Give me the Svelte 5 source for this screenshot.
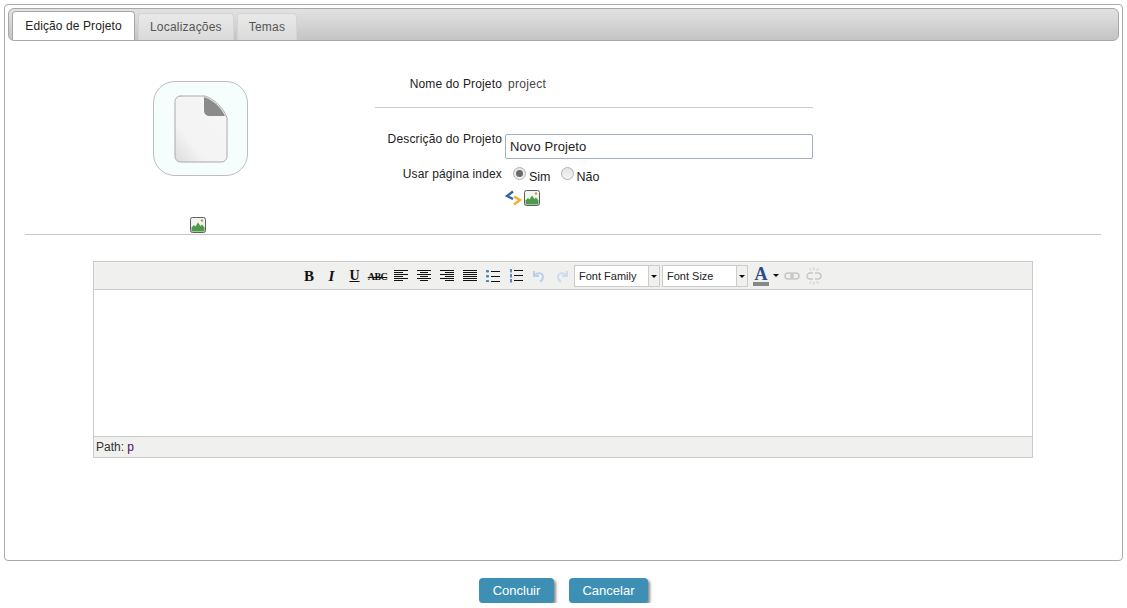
<script>
    const tabs = ['Edição de Projeto', 'Localizações', 'Temas'];
    const alignIcons = [
        [[0, 14], [0, 9], [0, 14], [0, 9], [0, 14], [0, 9]],
        [[0, 14], [3, 11], [0, 14], [3, 11], [0, 14], [3, 11]],
        [[0, 14], [5, 14], [0, 14], [5, 14], [0, 14], [5, 14]],
        [[0, 14], [0, 14], [0, 14], [0, 14], [0, 14], [0, 14]]
    ];
</script>

{#snippet imageIcon()}
    <svg class="img-icon" width="16" height="16" viewBox="0 0 16 16">
        <rect x="0.5" y="0.5" width="15" height="15" rx="2" fill="#f2f4ee" stroke="#5a5f5a" />
        <path d="M1.500 14.500V10.500L4 8L5.500 9.500L8 5.500L10.500 9L12 7.500L14.500 10.500V14.500Z" fill="#4c9a4a" />
        <circle cx="12" cy="3.500" r="1.200" fill="#b3a14c" />
    </svg>
{/snippet}

<div class="panel">
    <div class="tabbar">
        {#each tabs as tab, i}
            <div class="tab" class:active={i === 0}>{tab}</div>
        {/each}
    </div>

    <div class="content">
        <div class="top">
            <div class="left">
                <div class="app-icon">
                    <svg width="54" height="68" viewBox="0 0 54 68">
                        <defs>
                            <linearGradient id="sheet" x1="0" y1="1" x2="1" y2="0">
                                <stop offset="0" stop-color="#dcdcdc" />
                                <stop offset="0.3" stop-color="#f3f3f3" />
                                <stop offset="1" stop-color="#f7f7f7" />
                            </linearGradient>
                        </defs>
                        <path d="M6 1H31C40 4 50 13 53 23V61.500A5.500 5.500 0 0 1 47.500 67H6.500A5.500 5.500 0 0 1 1 61.500V6.500A5.500 5.500 0 0 1 6.500 1Z" fill="url(#sheet)" stroke="#aaa" />
                        <path d="M30 2C39 5 47 12 51 21H35.500A5.500 5.500 0 0 1 30 15.500Z" fill="#8b8b8b" />
                    </svg>
                </div>
                <div class="left-action">{@render imageIcon()}</div>
            </div>

            <div class="form">
                <div class="row name-row">
                    <span class="label">Nome do Projeto</span>
                    <span class="value">project</span>
                </div>
                <hr class="form-rule" />
                <div class="row desc-row">
                    <span class="label">Descrição do Projeto</span>
                    <input class="text" type="text" value="Novo Projeto" />
                </div>
                <div class="row index-row">
                    <span class="label">Usar página index</span>
                    <div class="radios">
                        <span class="radio checked"></span><span class="radio-text">Sim</span>
                        <span class="radio"></span><span class="radio-text">Não</span>
                    </div>
                </div>
                <div class="row icon-row">
                    <span class="label"></span>
                    <div class="form-icons">
                        <svg width="17" height="16" viewBox="0 0 17 16">
                            <path d="M8 1.500L2 6L8 9" fill="none" stroke="#2f64ad" stroke-width="2.400" />
                            <path d="M9 6.500L15 10L9 14.500" fill="none" stroke="#f5b02e" stroke-width="2.400" />
                        </svg>
                        {@render imageIcon()}
                    </div>
                </div>
            </div>
        </div>

        <hr class="main-rule" />

        <div class="editor">
            <div class="toolbar">
                <span class="tb b">B</span>
                <span class="tb i">I</span>
                <span class="tb u">U</span>
                <span class="tb s">ABC</span>
                {#each alignIcons as lines}
                    <span class="tb">
                        <svg width="14" height="12" viewBox="0 0 14 12">
                            {#each lines as l, n}
                                <rect x={l[0]} y={n * 2} width={l[1] - l[0]} height="1" fill="#111" />
                            {/each}
                        </svg>
                    </span>
                {/each}
                <span class="tb">
                    <svg width="14" height="12" viewBox="0 0 14 12">
                        {#each [0, 5, 10] as y}
                            <rect x="0" {y} width="3" height="2.500" rx="1" fill="#4f7cb5" />
                            <rect x="5" y={y + 1} width="9" height="1" fill="#111" />
                        {/each}
                    </svg>
                </span>
                <span class="tb">
                    <svg width="14" height="14" viewBox="0 0 14 14">
                        {#each [0, 5, 10] as y}
                            <rect x="1" {y} width="2" height="3.500" fill="#5d86bd" />
                            <rect x="5" y={y + 1} width="9" height="1" fill="#111" />
                        {/each}
                    </svg>
                </span>
                <span class="tb">
                    <svg width="14" height="14" viewBox="0 0 14 14">
                        <path d="M2 2V7H7M2.500 6.500C5 3 11 3.500 11 8C11 10 10 11.500 8 12.500" fill="none" stroke="#bcd0e8" stroke-width="2" />
                    </svg>
                </span>
                <span class="tb">
                    <svg width="14" height="14" viewBox="0 0 14 14">
                        <path d="M12 2V7H7M11.500 6.500C9 3 3 3.500 3 8C3 10 4 11.500 6 12.500" fill="none" stroke="#cfdcec" stroke-width="2" />
                    </svg>
                </span>
                <div class="select family"><span class="select-text">Font Family</span><span class="select-arrow"></span></div>
                <div class="select size"><span class="select-text">Font Size</span><span class="select-arrow"></span></div>
                <span class="color">
                    <span class="color-a">A</span>
                    <span class="color-bar"></span>
                </span>
                <span class="color-arrow"></span>
                <span class="tb link">
                    <svg width="16" height="10" viewBox="0 0 16 10">
                        <rect x="1" y="2" width="8" height="6" rx="3" fill="none" stroke="#c6c6c6" stroke-width="1.500" />
                        <rect x="7" y="2" width="8" height="6" rx="3" fill="none" stroke="#c6c6c6" stroke-width="1.500" />
                    </svg>
                </span>
                <span class="tb link">
                    <svg width="16" height="18" viewBox="0 0 16 18">
                        <path d="M7 6H4A3 3 0 0 0 4 12H7M9 6H12A3 3 0 0 1 12 12H9" fill="none" stroke="#c6c6c6" stroke-width="1.300" />
                        <path d="M8 0V3.500M3.500 1L5.500 4M12.500 1L10.500 4M8 14.500V18M3.500 17L5.500 14M12.500 17L10.500 14" stroke="#cfcfcf" fill="none" />
                    </svg>
                </span>
            </div>
            <div class="edit-area"></div>
            <div class="status">Path: <span class="path">p</span></div>
        </div>
    </div>
</div>

<div class="buttons">
    <button class="btn concluir">Concluir</button>
    <button class="btn cancelar">Cancelar</button>
</div>

<style>
    :global(body) {
        font-family: "Liberation Sans", Arial, sans-serif;
        font-size: 12px;
        color: #222;
        background: #fff;
    }
    .panel {
        margin: 4px 4px 0;
        height: 557px;
        box-sizing: border-box;
        border: 1px solid #aaa;
        border-radius: 4px;
        padding: 3px;
    }
    .tabbar {
        height: 33px;
        box-sizing: border-box;
        border: 1px solid #a8a8a8;
        border-radius: 6px;
        background: linear-gradient(#e2e2e2, #c4c4c4);
        display: flex;
        align-items: flex-end;
        gap: 3px;
        padding-left: 3px;
    }
    .tab {
        height: 27px;
        box-sizing: border-box;
        padding: 6px 11px 0;
        border: 1px solid #d4d4d4;
        border-bottom: 0;
        border-radius: 4px 4px 0 0;
        background: linear-gradient(#e9e9e9, #dadada);
        color: #555;
        letter-spacing: 0.2px;
    }
    .tab.active {
        width: 123px;
        height: 29px;
        padding: 7px 0 0;
        text-align: center;
        background: #fff;
        border-color: #a8a8a8;
        color: #222;
        letter-spacing: 0.1px;
    }
    .content {
        padding: 0 17px;
    }
    .top {
        display: flex;
        height: 193px;
    }
    .left {
        width: 350px;
        display: flex;
        flex-direction: column;
        align-items: center;
        padding-top: 40px;
        box-sizing: border-box;
    }
    .app-icon {
        width: 95px;
        height: 95px;
        box-sizing: border-box;
        border: 1px solid #bdbdbd;
        border-radius: 22px;
        background: #f6fdfd;
        display: flex;
        align-items: center;
        justify-content: center;
        padding-left: 1px;
    }
    .left-action {
        margin: 41px 4px 0 0;
        display: flex;
    }
    .img-icon {
        display: block;
    }
    .form {
        width: 438px;
        padding-top: 36px;
    }
    .row {
        display: flex;
    }
    .label {
        width: 127px;
        text-align: right;
        flex: none;
        letter-spacing: 0.15px;
    }
    .name-row .value {
        margin-left: 6px;
        color: #444;
        letter-spacing: 0.3px;
    }
    .name-row {
        line-height: 15px;
    }
    .form-rule {
        margin: 15px 0 26px;
        border: 0;
        border-top: 1px solid #c8cbd0;
    }
    .desc-row {
        height: 25px;
    }
    .desc-row .label {
        margin-top: -2px;
    }
    .text {
        margin-left: 3px;
        width: 308px;
        height: 25px;
        box-sizing: border-box;
        border: 1px solid #a3aec2;
        border-radius: 2px;
        padding: 0 4px;
        font: 13px "Liberation Sans", Arial, sans-serif;
        letter-spacing: 0.1px;
        color: #222;
    }
    .index-row {
        margin-top: 7px;
        height: 19px;
        line-height: 16px;
    }
    .radios {
        display: flex;
        align-items: center;
        margin-left: 11px;
        height: 18px;
        font-size: 12.500px;
    }
    .radio {
        width: 13px;
        height: 13px;
        box-sizing: border-box;
        border: 1px solid #b0b0b0;
        border-radius: 50%;
        background: linear-gradient(#e4e4e4, #f4f4f4);
        margin-top: -3px;
        position: relative;
    }
    .radio.checked::after {
        content: "";
        position: absolute;
        left: 2px;
        top: 2px;
        width: 7px;
        height: 7px;
        border-radius: 50%;
        background: #6a6a6a;
    }
    .radio-text {
        margin: 3px 10px 0 3px;
    }
    .icon-row {
        margin-top: 5px;
    }
    .form-icons {
        display: flex;
        margin-left: 3px;
        gap: 2px;
    }
    .main-rule {
        margin: 0;
        border: 0;
        border-top: 1px solid #c8c8c8;
        width: 1076px;
    }
    .editor {
        margin: 26px 0 0 68px;
        width: 940px;
        box-sizing: border-box;
        border: 1px solid #ccc;
    }
    .toolbar {
        height: 28px;
        box-sizing: border-box;
        background: #f0f0ee;
        border-bottom: 1px solid #ccc;
        display: flex;
        align-items: center;
        padding-left: 204px;
    }
    .tb {
        width: 23px;
        height: 20px;
        flex: none;
        display: flex;
        align-items: center;
        justify-content: center;
        color: #111;
        font-family: "Liberation Serif", serif;
    }
    .b {
        width: 22px;
        font-weight: bold;
        font-size: 15px;
        margin-top: 2px;
    }
    .i {
        font-style: italic;
        font-weight: bold;
        font-size: 15px;
        margin-top: 2px;
    }
    .u {
        text-decoration: underline;
        font-weight: bold;
        font-size: 14px;
        margin-top: 1px;
    }
    .s {
        text-decoration: line-through;
        font-size: 10px;
        font-weight: bold;
        letter-spacing: -0.5px;
        margin-top: 1px;
    }
    .select {
        height: 22px;
        box-sizing: border-box;
        border: 1px solid #ccc;
        background: #fff;
        display: flex;
        margin-right: 2px;
        flex: none;
        font-size: 11px;
        color: #222;
    }
    .family {
        width: 86px;
        margin-left: 1px;
    }
    .size {
        width: 86px;
    }
    .select-text {
        flex: 1;
        padding: 4px 0 0 4px;
    }
    .select-arrow {
        width: 10px;
        border-left: 1px solid #ccc;
        background: #f0f0ee;
        position: relative;
    }
    .select-arrow::after,
    .color-arrow {
        content: "";
        border-left: 3px solid transparent;
        border-right: 3px solid transparent;
        border-top: 3px solid #111;
    }
    .select-arrow::after {
        position: absolute;
        left: 2px;
        top: 9px;
    }
    .color {
        width: 16px;
        margin-left: 3px;
        display: flex;
        flex-direction: column;
        align-items: center;
    }
    .color-a {
        font: bold 18px/16px "Liberation Serif", serif;
        color: #2a4a8a;
    }
    .color-bar {
        width: 16px;
        height: 4px;
        background: #888;
    }
    .color-arrow {
        margin: 0 2px 0 4px;
    }
    .link {
        width: 22px;
    }
    .edit-area {
        height: 146px;
        background: #fff;
    }
    .status {
        height: 21px;
        box-sizing: border-box;
        background: #f0f0ee;
        border-top: 1px solid #ccc;
        padding: 3px 2px 0;
        color: #333;
    }
    .path {
        color: #4b0d66;
    }
    .buttons {
        display: flex;
        justify-content: flex-start;
        gap: 15px;
        padding: 17px 0 0 479px;
    }
    .btn {
        height: 25px;
        border: 0;
        border-radius: 4px;
        background: #3e8fb4;
        color: #fff;
        font: 13px "Liberation Sans", Arial, sans-serif;
        box-shadow: 2px 2px 3px #888;
        padding: 0;
    }
    .concluir {
        width: 75px;
    }
    .cancelar {
        width: 79px;
    }
</style>
